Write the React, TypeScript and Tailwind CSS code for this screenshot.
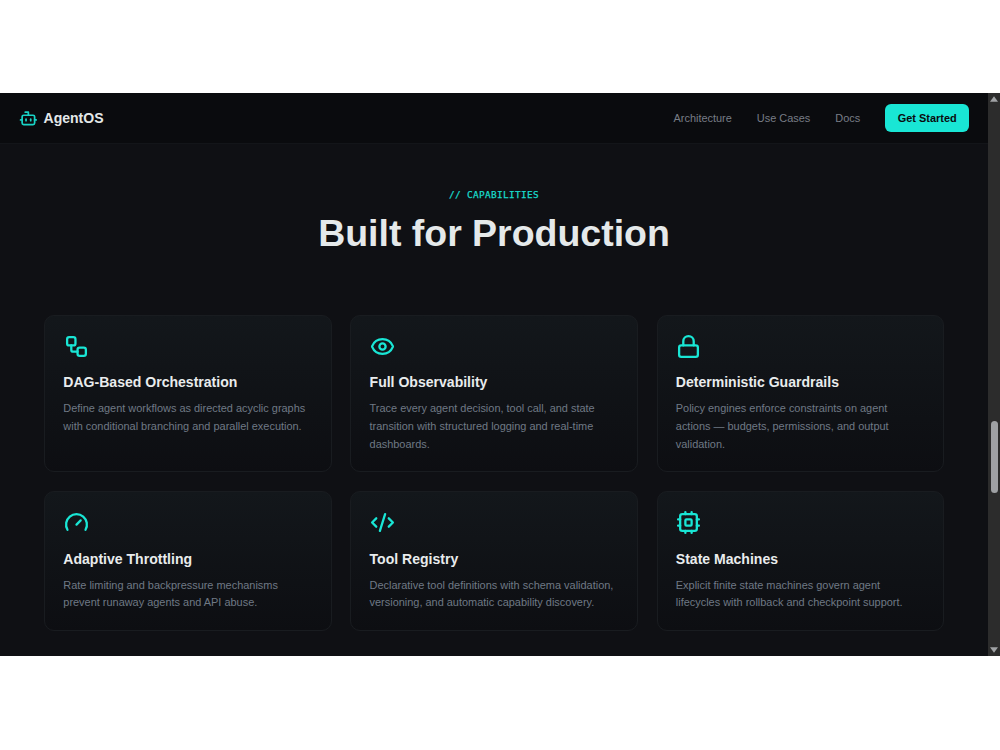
import type { ReactNode } from "react";
import { Bot, CodeXml, Eye, Gauge, Lock, Workflow } from "lucide-react";

const iconClass = "ml-[0.25px] block h-[25px] w-[25px] text-[#19e6d5] [stroke-width:2.2]";

function Chip() {
  return (
    <svg
      className={iconClass}
      viewBox="0 0 24 24"
      fill="none"
      stroke="currentColor"
      strokeLinecap="round"
      strokeLinejoin="round"
    >
      <rect x="4" y="4" width="16" height="16" rx="2" />
      <rect x="9" y="9" width="6" height="6" rx="1" />
      <path d="M15 2v2M15 20v2M2 15h2M2 9h2M20 15h2M20 9h2M9 2v2M9 20v2" />
    </svg>
  );
}

type Feature = { icon: ReactNode; title: string; lines: string[] };

const features: Feature[] = [
  {
    icon: <Workflow className={iconClass} />,
    title: "DAG-Based Orchestration",
    lines: ["Define agent workflows as directed acyclic graphs", "with conditional branching and parallel execution."],
  },
  {
    icon: <Eye className={iconClass} />,
    title: "Full Observability",
    lines: ["Trace every agent decision, tool call, and state", "transition with structured logging and real-time", "dashboards."],
  },
  {
    icon: <Lock className={iconClass} />,
    title: "Deterministic Guardrails",
    lines: ["Policy engines enforce constraints on agent", "actions — budgets, permissions, and output", "validation."],
  },
  {
    icon: <Gauge className={iconClass} />,
    title: "Adaptive Throttling",
    lines: ["Rate limiting and backpressure mechanisms", "prevent runaway agents and API abuse."],
  },
  {
    icon: <CodeXml className={iconClass} />,
    title: "Tool Registry",
    lines: ["Declarative tool definitions with schema validation,", "versioning, and automatic capability discovery."],
  },
  {
    icon: <Chip />,
    title: "State Machines",
    lines: ["Explicit finite state machines govern agent", "lifecycles with rollback and checkpoint support."],
  },
];

function FeatureCard({ icon, title, lines }: Feature) {
  return (
    <article className="rounded-[10px] border border-[#191c20] bg-linear-to-b from-[#13171b] to-[#0d0e12] px-[18.3px] pt-[18px] pb-[17.5px]">
      {icon}
      <h3 className="mt-[13.6px] text-[14.06px] leading-[21.9px] font-bold whitespace-nowrap text-[#e9eced]">{title}</h3>
      <p className="mt-[6.2px] text-[10.94px] leading-[17.8px] whitespace-nowrap text-[#6f7985]">
        {lines.map((line) => (
          <span key={line} className="block">
            {line}
          </span>
        ))}
      </p>
    </article>
  );
}

function Nav() {
  return (
    <header className="flex h-[51px] shrink-0 items-center justify-between border-b border-[#131519] bg-[#0a0b0e] px-[18.75px]">
      <div className="flex items-center gap-[6px]">
        <Bot className="h-[18.75px] w-[18.75px] text-[#18d3c5] [stroke-width:2.2]" />
        <span className="pt-px text-[14.06px] font-bold text-[#e4e8e9]">AgentOS</span>
      </div>
      <nav className="flex items-center gap-[25px] text-[10.94px] text-[#787d86]">
        <a>Architecture</a>
        <a>Use Cases</a>
        <a>Docs</a>
        <button className="h-[28px] w-[84px] rounded-[6px] bg-[#19e6d5] font-bold whitespace-nowrap text-[#0a0b0e]">
          Get Started
        </button>
      </nav>
    </header>
  );
}

function Scrollbar() {
  return (
    <div className="flex w-3 shrink-0 flex-col items-center bg-[#2c2c2c]">
      <svg className="mt-[3px] h-[6px] w-2" viewBox="0 0 8 6" fill="#a0a2a5">
        <path d="M4 0.3 8 5.7H0Z" />
      </svg>
      <div className="mt-[319px] h-[72px] w-[7px] rounded-full bg-[#9fa1a4]" />
      <svg className="mt-auto mb-[3px] h-[6px] w-2" viewBox="0 0 8 6" fill="#a0a2a5">
        <path d="M4 5.7 0 0.3H8Z" />
      </svg>
    </div>
  );
}

export default function App() {
  return (
    <div className="h-[750px] overflow-hidden bg-white pt-[93px] font-['Liberation_Sans',Arial,sans-serif]">
      <div className="flex h-[563px] overflow-hidden bg-[#0f1014]">
        <div className="flex w-[988px] flex-col">
          <Nav />
          <main className="px-11 pt-[43px]">
            <p className="text-center font-['DejaVu_Sans_Mono',monospace] text-[9.4px] leading-4 tracking-[0.34px] text-[#19dccd] [-webkit-text-stroke:0.25px_#19dccd]">
              // CAPABILITIES
            </p>
            <h2 className="mt-[7px] text-center text-[37.5px] leading-[47px] font-bold tracking-[-0.02px] text-[#e5e9ea]">
              Built for Production
            </h2>
            <div className="mt-[57.6px] grid grid-cols-3 gap-[18.75px]">
              {features.map((feature) => (
                <FeatureCard key={feature.title} {...feature} />
              ))}
            </div>
          </main>
        </div>
        <Scrollbar />
      </div>
    </div>
  );
}
